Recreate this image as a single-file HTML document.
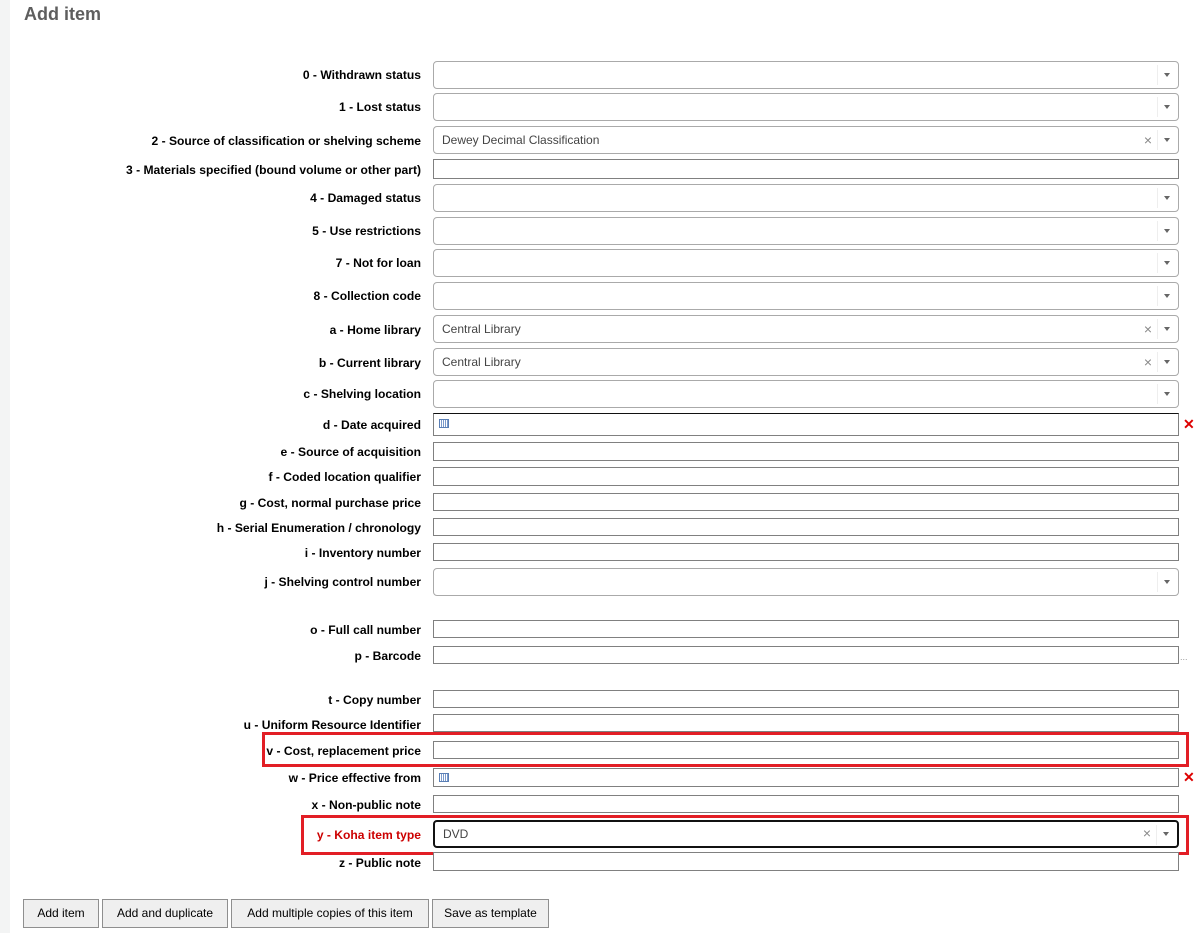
<!DOCTYPE html>
<html><head><meta charset="utf-8"><style>
*{box-sizing:border-box;margin:0;padding:0}
body{width:1197px;height:933px;background:#fff;position:relative;overflow:hidden;font-family:"Liberation Sans",sans-serif}
.strip{position:absolute;left:0;top:0;width:10px;height:933px;background:#f3f4f4}
h1{position:absolute;left:24px;top:4px;font-size:18px;color:#5e5e5e;font-weight:bold}
.l{position:absolute;right:776px;font-size:12.1px;font-weight:bold;color:#000;white-space:nowrap;line-height:14px}
.t{position:absolute;left:433px;width:746px;border:1px solid #808080;background:#fff}
.s{position:absolute;left:433px;width:746px;height:28px;border:1px solid #aaa;border-radius:4px;background:#fff;font-size:12px;color:#444;padding-left:8px;line-height:26px}
.s:after{content:"";position:absolute;right:0;top:3px;width:20px;height:20px;border-left:1px solid #eee}
.s i{position:absolute;right:8px;top:11px;border-left:3px solid transparent;border-right:3px solid transparent;border-top:4px solid #666}
.s b{position:absolute;right:26px;top:0;font-weight:normal;color:#888;font-size:14px}
.cal{position:absolute;left:5px;top:5px;width:10px;height:9px;border:1px solid #5a7fb5;background:repeating-linear-gradient(90deg,#fff 0 1px,#7a9acc 1px 2px)}
.rx{position:absolute;left:1183px;color:#d00;font-weight:bold;font-size:14px}
.box{position:absolute;border:3px solid #e21e25}
.btn{position:absolute;top:899px;height:29px;border:1px solid #8f8f8f;background:#efefef;font-size:12px;line-height:27px;text-align:center;color:#000}
</style></head><body>
<div class="strip"></div>
<h1>Add item</h1>

<div class="l" style="top:68px">0 - Withdrawn status</div><div class="s" style="top:61px"><i></i></div>
<div class="l" style="top:100px">1 - Lost status</div><div class="s" style="top:93px"><i></i></div>
<div class="l" style="top:134px">2 - Source of classification or shelving scheme</div><div class="s" style="top:126px">Dewey Decimal Classification<b>×</b><i></i></div>
<div class="l" style="top:163px">3 - Materials specified (bound volume or other part)</div><div class="t" style="top:159px;height:20px"></div>
<div class="l" style="top:191px">4 - Damaged status</div><div class="s" style="top:184px"><i></i></div>
<div class="l" style="top:224px">5 - Use restrictions</div><div class="s" style="top:217px"><i></i></div>
<div class="l" style="top:256px">7 - Not for loan</div><div class="s" style="top:249px"><i></i></div>
<div class="l" style="top:289px">8 - Collection code</div><div class="s" style="top:282px"><i></i></div>
<div class="l" style="top:323px">a - Home library</div><div class="s" style="top:315px">Central Library<b>×</b><i></i></div>
<div class="l" style="top:356px">b - Current library</div><div class="s" style="top:348px">Central Library<b>×</b><i></i></div>
<div class="l" style="top:387px">c - Shelving location</div><div class="s" style="top:380px"><i></i></div>
<div class="l" style="top:418px">d - Date acquired</div><div class="t" style="top:413px;height:23px;border-top-color:#111"><span class="cal"></span></div><div class="rx" style="top:416px">✕</div>
<div class="l" style="top:445px">e - Source of acquisition</div><div class="t" style="top:442px;height:19px"></div>
<div class="l" style="top:470px">f - Coded location qualifier</div><div class="t" style="top:467px;height:19px"></div>
<div class="l" style="top:496px">g - Cost, normal purchase price</div><div class="t" style="top:493px;height:18px"></div>
<div class="l" style="top:521px">h - Serial Enumeration / chronology</div><div class="t" style="top:518px;height:18px"></div>
<div class="l" style="top:546px">i - Inventory number</div><div class="t" style="top:543px;height:18px"></div>
<div class="l" style="top:575px">j - Shelving control number</div><div class="s" style="top:568px"><i></i></div>
<div class="l" style="top:623px">o - Full call number</div><div class="t" style="top:620px;height:18px"></div>
<div class="l" style="top:649px">p - Barcode</div><div class="t" style="top:646px;height:18px"></div><div style="position:absolute;left:1180px;top:652px;font-size:9px;color:#999">...</div>
<div class="l" style="top:693px">t - Copy number</div><div class="t" style="top:690px;height:18px"></div>
<div class="l" style="top:718px">u - Uniform Resource Identifier</div><div class="t" style="top:714px;height:18px"></div>
<div class="l" style="top:744px">v - Cost, replacement price</div><div class="t" style="top:741px;height:18px"></div>
<div class="box" style="left:262px;top:732px;width:927px;height:35px"></div>
<div class="l" style="top:771px">w - Price effective from</div><div class="t" style="top:768px;height:19px"><span class="cal" style="top:4px"></span></div><div class="rx" style="top:769px">✕</div>
<div class="l" style="top:798px">x - Non-public note</div><div class="t" style="top:795px;height:18px"></div>
<div class="l" style="top:828px;color:#c00">y - Koha item type</div><div class="s" style="top:820px;border:2px solid #111;line-height:24px">DVD<b style="top:-1px">×</b><i style="top:10px"></i></div>
<div class="box" style="left:301px;top:815px;width:888px;height:40px"></div>
<div class="l" style="top:856px">z - Public note</div><div class="t" style="top:852px;height:19px"></div>

<div class="btn" style="left:23px;width:76px">Add item</div>
<div class="btn" style="left:102px;width:126px">Add and duplicate</div>
<div class="btn" style="left:231px;width:198px">Add multiple copies of this item</div>
<div class="btn" style="left:432px;width:117px">Save as template</div>
</body></html>
